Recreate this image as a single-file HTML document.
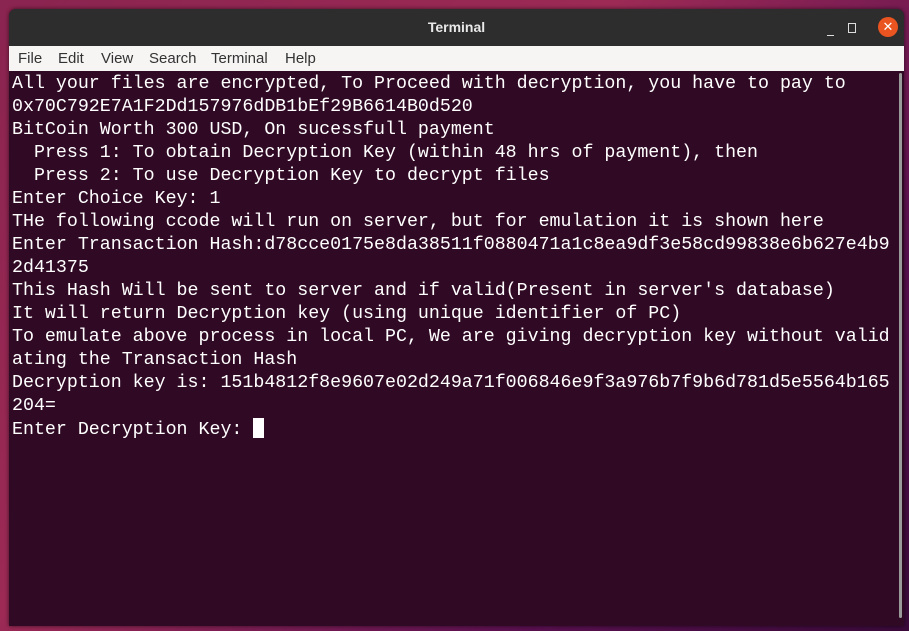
<!DOCTYPE html>
<html><head><meta charset="utf-8"><style>
body{margin:0;width:909px;height:631px;overflow:hidden;background:linear-gradient(135deg,#8a2450 0%,#9c2a55 40%,#5a1050 75%,#3a0a3a 100%);position:relative;font-family:"Liberation Sans",sans-serif}
.win{position:absolute;left:9px;top:9px;width:895px;height:617px;background:#300a24;border-radius:7px 7px 0 0;overflow:hidden;box-shadow:0 0 4px rgba(0,0,0,.6)}
.title{height:37px;background:#2d2d2d;color:#e8e8e8;font-weight:bold;font-size:14px;text-align:center;line-height:37px;position:relative}
.menu{height:25px;background:#f6f5f4;font-size:15px;color:#333;line-height:25px;position:relative}
.menu span{position:absolute;top:0}
.term{position:absolute;left:3px;top:64px;color:#fff;font-family:"Liberation Mono",monospace;font-size:18.3px;line-height:23px;white-space:pre}
.cur{display:inline-block;width:11px;height:20px;background:#fff;vertical-align:-4px}
.sb{position:absolute;right:2px;top:64px;width:3px;height:545px;background:#9a9a9a;border-radius:2px}
.close{position:absolute;right:6px;top:8px;width:20px;height:20px;border-radius:50%;background:#e95420;color:#fff;font-size:13px;line-height:20px;text-align:center;font-weight:normal}
</style></head><body>
<div class="win">
<div class="title">Terminal
<div style="position:absolute;left:818px;top:26px;width:7px;height:1px;background:#ddd"></div>
<div style="position:absolute;left:839px;top:14px;width:6px;height:8px;border:1px solid #ddd"></div>
<div class="close">✕</div>
</div>
<div class="menu"><span style="left:9px">File</span><span style="left:49px">Edit</span><span style="left:92px">View</span><span style="left:140px">Search</span><span style="left:202px">Terminal</span><span style="left:276px">Help</span></div>
<div class="term">All your files are encrypted, To Proceed with decryption, you have to pay to
0x70C792E7A1F2Dd157976dDB1bEf29B6614B0d520
BitCoin Worth 300 USD, On sucessfull payment
  Press 1: To obtain Decryption Key (within 48 hrs of payment), then
  Press 2: To use Decryption Key to decrypt files
Enter Choice Key: 1
THe following ccode will run on server, but for emulation it is shown here
Enter Transaction Hash:d78cce0175e8da38511f0880471a1c8ea9df3e58cd99838e6b627e4b9
2d41375
This Hash Will be sent to server and if valid(Present in server's database)
It will return Decryption key (using unique identifier of PC)
To emulate above process in local PC, We are giving decryption key without valid
ating the Transaction Hash
Decryption key is: 151b4812f8e9607e02d249a71f006846e9f3a976b7f9b6d781d5e5564b165
204=
Enter Decryption Key: <span class="cur"></span></div>
<div class="sb"></div>
</div>
</body></html>
